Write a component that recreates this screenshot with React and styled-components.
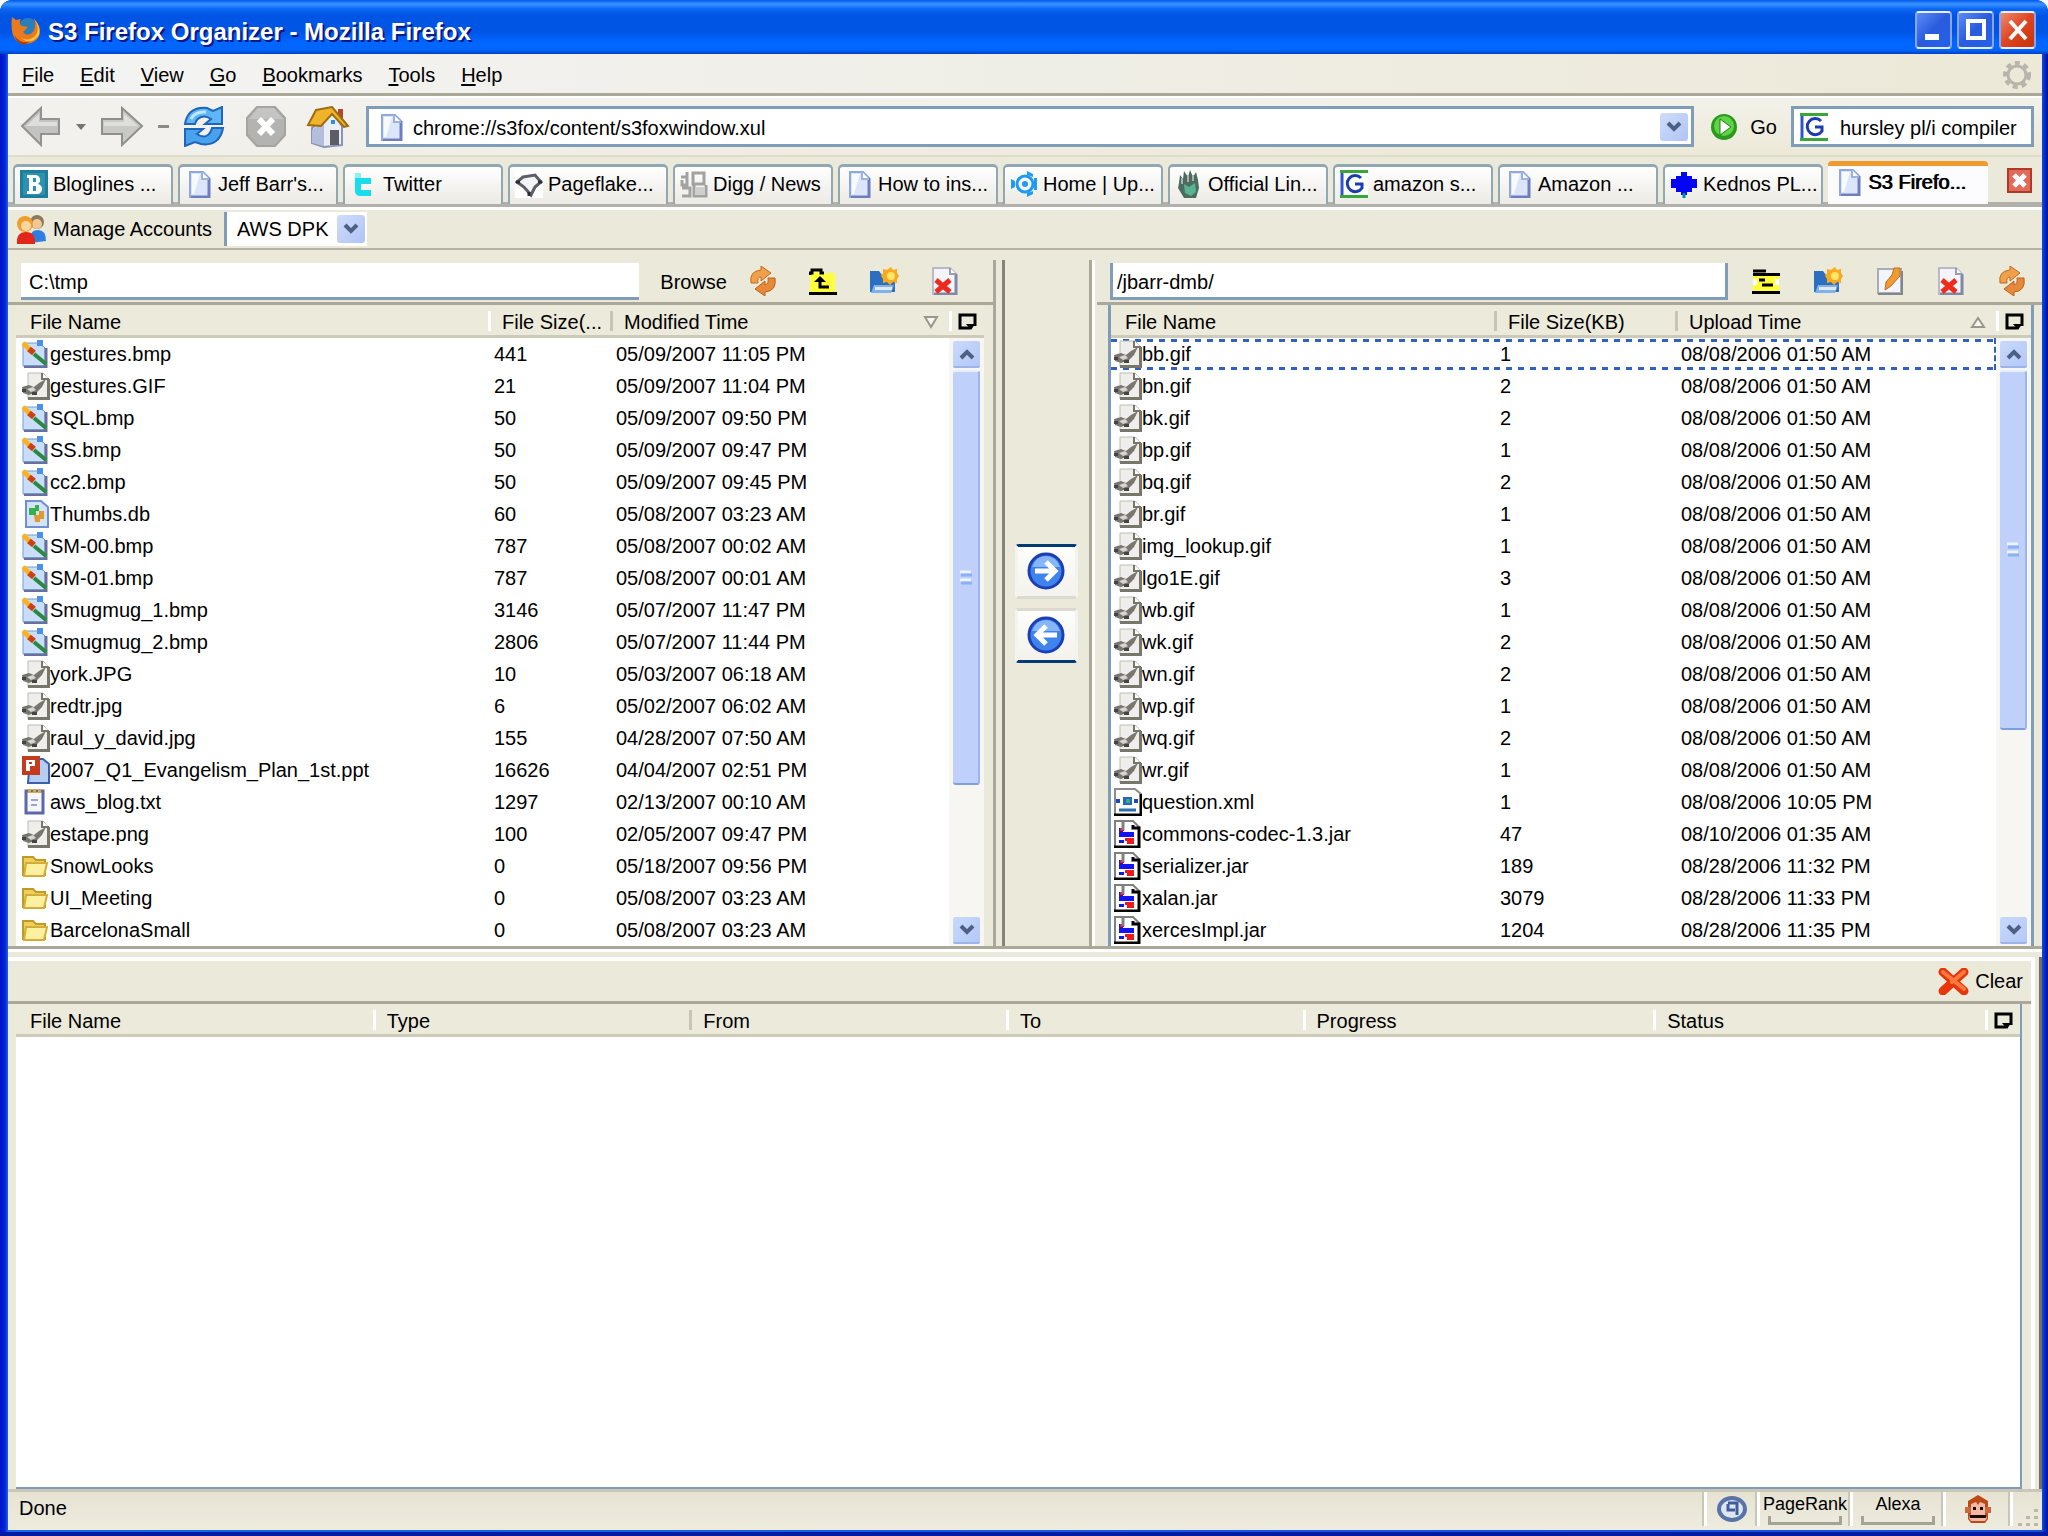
import React from "react";
import styled, { createGlobalStyle, css } from "styled-components";

const beige = "#ebe9da";
const line = "#aca899";
const fieldBlue = "#7f9db9";

const GlobalStyle = createGlobalStyle`
  *, *::before, *::after { box-sizing: border-box; }
  html, body { margin: 0; padding: 0; background: #fff; }
  body, button, input, select, table {
    font-family: "Liberation Sans", Arial, sans-serif;
    font-size: 20px;
    line-height: 24px;
    color: #000;
  }
  button, input, select { border: 0; margin: 0; padding: 0; background: none; border-radius: 0; }
  svg { display: block; flex: none; }
`;

/* ---------- window frame ---------- */

const Window = styled.div`
  min-height: 100vh;
  display: flex;
  flex-direction: column;
  border-radius: 12px 12px 0 0;
  border-bottom: 4px solid #021ba0;
  overflow: hidden;
  background: linear-gradient(to right, #0014c4 0, #0024d8 5px, #1a66ee 8px, #1450e0 calc(100% - 6px), #0a3ce0 calc(100% - 5px), #00128e 100%);
`;

const TitleBar = styled.header`
  height: 54px;
  display: flex;
  align-items: center;
  gap: 6px;
  padding: 6px 12px 0 10px;
  background: linear-gradient(#0058ee 0, #3a93ff 4px, #0a66f4 9px, #0054e3 16px, #0055e5 32px, #0066ff 42px, #0066ff 50px, #003fc0 54px);
`;

const Title = styled.h1`
  flex: 1;
  margin: 0;
  padding-top: 4px;
  font-size: 24px;
  line-height: 32px;
  font-weight: bold;
  color: #fff;
  text-shadow: 2px 2px 0 #0a1883;
  white-space: nowrap;
`;

const CaptionButtons = styled.div`
  display: flex;
  gap: 5px;
`;

const CaptionButton = styled.button`
  width: 37px;
  height: 38px;
  display: grid;
  place-items: center;
  border: 2px solid #e8efff;
  border-left-color: #86a6f4;
  border-right-color: #86a6f4;
  border-radius: 4px;
  background: ${(p) =>
    p.$danger
      ? "linear-gradient(135deg, #f0886c, #dd4420 50%, #c93208)"
      : "linear-gradient(135deg, #5b8bf6, #2a5bdd 50%, #2263ea)"};
`;

const Client = styled.main`
  flex: 1;
  display: flex;
  flex-direction: column;
  margin: 0 6px 2px 8px;
  background: ${beige};
`;

/* ---------- browser chrome ---------- */

const MenuBar = styled.nav`
  height: 44px;
  display: flex;
  align-items: center;
  padding: 0 10px 0 1px;
  border-bottom: 2px solid #fff;
  box-shadow: inset 0 -3px 0 ${line};
  background: linear-gradient(to right, #f4f4f3, #f0efe9 40%, #ece9d8);
`;

const MenuItem = styled.button`
  padding: 0 13px;
  height: 32px;
  u { text-underline-offset: 2px; }
`;

const Spacer = styled.div`
  flex: 1;
`;

const NavBar = styled.div`
  height: 59px;
  display: flex;
  align-items: flex-start;
  padding: 8px 8px 0 12px;
  border-bottom: 2px solid #dfdccb;
  background:
    linear-gradient(to right, #f2f1ee, rgba(236, 233, 216, 0) 70%),
    linear-gradient(#f3f2ea, #ece9d8);
`;

const IconButton = styled.button`
  display: grid;
  place-items: center;
  height: 41px;
  width: ${(p) => p.$w || 44}px;
  margin-right: ${(p) => p.$gap || 0}px;
`;

const Field = styled.div`
  display: flex;
  align-items: center;
  height: 41px;
  border: 3px solid ${fieldBlue};
  background: #fff;
  padding: 0 3px 0 ${(p) => p.$pad || 8}px;
  ${(p) => (p.$grow ? css`flex: 1; min-width: 0;` : css`width: 243px; padding-right: 0;`)}
  gap: ${(p) => (p.$grow ? 8 : 12)}px;
  input {
    flex: 1;
    min-width: 0;
    height: 34px;
    padding-top: 4px;
    outline: none;
  }
`;

const GoButton = styled.button`
  display: flex;
  align-items: center;
  gap: 12px;
  height: 41px;
  padding: 0 14px 0 17px;
`;

const ArrowBox = styled.span`
  display: grid;
  place-items: center;
  width: 28px;
  height: 28px;
  border-radius: 3px;
  background: linear-gradient(135deg, #cfdcfb, #b0c4f4);
  pointer-events: none;
`;

const DropButton = styled(ArrowBox).attrs({ as: "button" })`
  pointer-events: auto;
`;

const TabStrip = styled.div`
  height: 53px;
  display: flex;
  align-items: flex-end;
  padding: 0 10px 0 5px;
  border-bottom: 3px solid #fff;
  box-shadow: inset 0 -5px 0 #b2b0aa;
`;

const TabList = styled.div`
  flex: 1;
  min-width: 0;
  display: flex;
  align-items: flex-end;
  gap: 5px;
  padding-bottom: 3px;
`;

const Tab = styled.button`
  flex: 1 1 0;
  min-width: 0;
  display: flex;
  align-items: center;
  gap: 5px;
  padding: 0 2px 4px 5px;
  height: 40px;
  border: 2px solid #91a7b4;
  border-top-width: 3px;
  border-bottom: 0;
  border-radius: 5px 5px 0 0;
  background: linear-gradient(#fff, #f3f2ee 60%, #ecebe5);
  white-space: nowrap;
  ${(p) =>
    p.$active &&
    css`
      height: 43px;
      padding: 0 4px 6px 7px;
      border: 0;
      border-top: 5px solid #f0992e;
      border-radius: 4px 4px 0 0;
      background: #fcfcfe;
      text-shadow: 1px 0 0 #000;
    `}
`;

const TabClose = styled.button`
  width: 25px;
  height: 25px;
  margin: 0 0 14px 19px;
`;

const AccountBar = styled.div`
  height: 40px;
  display: flex;
  align-items: center;
  padding: 0 8px;
  border-bottom: 2px solid #b5b2a3;
`;

const ManageButton = styled.button`
  display: flex;
  align-items: center;
  gap: 7px;
  height: 34px;
  margin-right: 12px;
`;

const SelectBox = styled.label`
  display: grid;
  align-items: center;
  width: 143px;
  height: 34px;
  padding-right: 2px;
  background: #fff;
  border-left: 3px solid ${fieldBlue};
  select, ${ArrowBox} { grid-area: 1 / 1; }
  select { appearance: none; width: 100%; height: 34px; padding-left: 10px; outline: none; }
  ${ArrowBox} { justify-self: end; }
`;

/* ---------- file panes ---------- */

const Panes = styled.section`
  display: grid;
  grid-template-columns: minmax(0, 985fr) 102px minmax(0, 947fr);
  border-bottom: 3px solid ${line};
`;

const Pane = styled.div`
  display: flex;
  flex-direction: column;
`;

const PaneTools = styled.div`
  height: 55px;
  display: flex;
  align-items: center;
  padding: 10px ${(p) => (p.$remote ? 16 : 34)}px 0 13px;
  margin-left: ${(p) => (p.$remote ? 2 : 0)}px;
  gap: ${(p) => (p.$remote ? 33 : 32)}px;
  border-bottom: 3px solid ${line};
`;

const PathInput = styled.input`
  && {
    flex: 1;
    min-width: 0;
    height: 37px;
    padding: 6px 8px 0;
    margin-right: -11px;
    background: #fff;
    outline: none;
    border-bottom: 3px solid ${fieldBlue};
    ${(p) =>
      p.$remote &&
      css`
        padding-left: 4px;
        margin-right: -9px;
        border-left: 3px solid ${fieldBlue};
        border-right: 3px solid ${fieldBlue};
      `}
  }
`;

const ToolButton = styled.button`
  height: 32px;
  min-width: 28px;
  display: grid;
  place-items: center;
`;

const BrowseButton = styled(ToolButton)`
  padding-top: 2px;
  margin-right: -10px;
`;

const TableFrame = styled.div`
  flex: 1;
  display: flex;
  flex-direction: column;
  background: #fff;
  margin: ${(p) => p.$margin};
  ${(p) => p.$edges && css`border-left: 3px solid ${fieldBlue}; border-right: 3px solid ${fieldBlue};`}
  ${(p) => p.$foot && css`border-right: 2px solid ${fieldBlue}; border-bottom: 2px solid ${fieldBlue};`}
`;

const Table = styled.table`
  width: 100%;
  table-layout: fixed;
  border-spacing: 0;
  th, td { padding: 0; text-align: left; font-weight: normal; white-space: nowrap; overflow: hidden; }
  th { height: 33px; padding-top: 2px; background: #eceadb; border-bottom: 3px solid #cdcaba; }
`;

const HeadCell = styled.div`
  display: flex;
  align-items: center;
  justify-content: ${(p) => (p.$picker ? "center" : "space-between")};
  height: 20px;
  padding: 2px ${(p) => (p.$picker ? 2 : 10)}px 0 ${(p) => (p.$picker ? 2 : 11)}px;
  border-left: 3px solid ${(p) => ({ light: "#fff", dark: "#c8c5b5" }[p.$line] || "transparent")};
`;

const Cell = styled.div`
  display: flex;
  align-items: center;
  height: 32px;
  padding-left: ${(p) => p.$pad || 6}px;
  ${(p) =>
    p.$focused &&
    css`
      background:
        repeating-linear-gradient(to right, #2f62bd 0 6px, transparent 6px 12px) 0 1px / 100% 3px no-repeat,
        repeating-linear-gradient(to right, #2f62bd 0 6px, transparent 6px 12px) 0 100% / 100% 3px no-repeat;
    `}
  ${(p) => p.$last && css`border-right: 2px dashed #2f62bd;`}
`;

const ScrollCell = styled.td`
  height: 1px;
`;

const ScrollTrack = styled.div`
  height: 100%;
  display: flex;
  flex-direction: column;
  align-items: center;
  gap: 2px;
  padding: 3px 0 2px;
  background: #f7f6f2;
`;

const ScrollButton = styled.button`
  width: 27px;
  height: 27px;
  display: grid;
  place-items: center;
  border-radius: 2px;
  border-bottom: 2px solid #9cb4ea;
  background: linear-gradient(135deg, #cad9fc, #b3c8f6);
`;

const Thumb = styled.div`
  flex: ${(p) => p.$size} 1 0;
  width: 27px;
  display: grid;
  place-content: center;
  border-right: 2px solid #9db5ee;
  border-bottom: 2px solid #7f9fdc;
  border-top: 2px solid #e6eefe;
  border-radius: 3px;
  background: #bfd1fb;
`;

const ScrollRest = styled.div`
  flex: ${(p) => p.$size} 1 0;
`;

const Middle = styled.div`
  display: flex;
  flex-direction: column;
  align-items: center;
  justify-content: center;
  gap: 9px;
  margin: 10px 0 0;
  border-left: 3px solid ${line};
  border-right: 3px solid #fff;
  box-shadow: inset 6px 0 0 ${beige}, inset 9px 0 0 #87857a, inset -3px 0 0 ${line};
  padding-left: 4px;
`;

const MoveButton = styled.button`
  width: 63px;
  height: 55px;
  display: grid;
  place-items: center;
  border: 3px solid #d5d2c4;
  border-top-color: ${(p) => (p.$first ? "#003c74" : "#dbd9d0")};
  border-bottom-color: ${(p) => (p.$first ? "#dbd9d0" : "#003c74")};
  border-left-color: #f4f3ee;
  border-right-color: #f4f3ee;
  border-radius: 4px;
  background: linear-gradient(#fdfdfc, #f3f2ec);
`;

/* ---------- transfer queue ---------- */

const Queue = styled.section`
  flex: 1;
  display: flex;
  flex-direction: column;
  border-top: 3px solid #fff;
  padding-top: 5px;
`;

const QueueBody = styled.div`
  flex: 1;
  display: flex;
  flex-direction: column;
  margin-right: 4px;
  border-top: 4px solid #fff;
  border-right: 4px solid #fff;
`;

const QueueEdge = styled.div`
  flex: 1;
  display: flex;
  flex-direction: column;
  border-right: 3px solid #716f64;
`;

const QueueTools = styled.div`
  height: 43px;
  display: flex;
  align-items: center;
  justify-content: flex-end;
  padding-right: 8px;
  border-bottom: 3px solid ${line};
`;

const ClearButton = styled.button`
  display: flex;
  align-items: center;
  gap: 6px;
  height: 32px;
`;

/* ---------- status bar ---------- */

const StatusBar = styled.footer`
  height: 41px;
  display: flex;
  border-top: 3px solid #cbc7b8;
  background: linear-gradient(#e6e3d3, #eeecdf);
`;

const StatusText = styled.div`
  flex: 1;
  padding: 4px 11px;
`;

const StatusCell = styled.div`
  width: ${(p) => p.$w}px;
  display: flex;
  flex-direction: column;
  align-items: center;
  justify-content: ${(p) => (p.$end ? "flex-end" : "center")};
  margin-bottom: 4px;
  border-left: 3px solid #fff;
  box-shadow: -2px 0 0 #c9c6b7;
  font-size: 18px;
  line-height: 20px;
`;

const Meter = styled.div`
  width: 74px;
  height: 9px;
  margin-top: 2px;
  border: 3px solid #a5a398;
  border-top: 0;
`;

/* ---------- drawings ---------- */

const Svg = ({ w = 28, h = 28, box, children }) => (
  <svg width={w} height={h} viewBox={box || `0 0 ${w} ${h}`} aria-hidden="true">
    {children}
  </svg>
);

const Chevron = ({ up }) => (
  <Svg w={16} h={12}>
    <path d={up ? "M2 10 L8 4 L14 10" : "M2 2 L8 8 L14 2"} fill="none" stroke="#4d6185" strokeWidth="4" />
  </Svg>
);

const PageIcon = () => (
  <Svg>
    <path d="M5 2h13l6 6v19H5z" fill="#dbe6fb" stroke="#8fa9dc" strokeWidth="2" />
    <path d="M7 4h8L9 24H7z" fill="#f7faff" />
    <path d="M24 8v19H6" fill="none" stroke="#6f7fbd" strokeWidth="3" />
    <path d="M17 2v7h7" fill="#fff" stroke="#9db2dc" strokeWidth="2" />
  </Svg>
);

const Google = () => (
  <Svg>
    <rect width="28" height="28" fill="#fff" />
    <path d="M0 1.500h28M0 26.500h28" stroke="#3aa63a" strokeWidth="3" />
    <path d="M2 3v22" stroke="#2d55d0" strokeWidth="3" />
    <path d="M21 8a8 8 0 1 0 1 10v-4h-7" fill="none" stroke="#1b3bb0" strokeWidth="3" />
  </Svg>
);

const tabIcons = {
  page: <PageIcon />,
  google: <Google />,
  bloglines: (
    <Svg>
      <rect width="28" height="28" fill="#1f7f9b" />
      <rect x="3" y="3" width="22" height="22" fill="#2b93b0" />
      <path d="M7 5h9a5 5 0 0 1 2 9a5 5 0 0 1-2 10H7v-3h2V8H7zM13 8v4h3V8zM13 16v5h3v-5z" fill="#fff" fillRule="evenodd" />
    </Svg>
  ),
  twitter: (
    <Svg>
      <path d="M5 3h6v5h10v6H11v6h10v6H9q-4-1-4-5z" fill="#19dcec" />
      <path d="M5 3h6v5H5z" fill="#8cf0f6" />
    </Svg>
  ),
  pageflakes: (
    <Svg>
      <rect width="28" height="28" fill="#fff" />
      <path d="M8 7L20 5L26 12L20 17L16 25L9 17L2 12z" fill="#f4f4f6" stroke="#5d5f68" strokeWidth="3" />
      <path d="M1 12h4M23 12h4M14 22v4" stroke="#2d2f36" strokeWidth="3" />
    </Svg>
  ),
  digg: (
    <Svg>
      <path d="M1 7h7M7 2v13H2V10M13 3h11v11H13zM2 18h8v8H2M14 14v12h12V15" fill="none" stroke="#a2a2a2" strokeWidth="3" />
      <rect x="15" y="17" width="10" height="8" fill="#cfcfcf" />
    </Svg>
  ),
  upcoming: (
    <Svg>
      <circle cx="15" cy="14" r="8" fill="none" stroke="#1f9bf0" strokeWidth="3" />
      <circle cx="15" cy="14" r="3" fill="#1f9bf0" />
      <path d="M1 9l4 2v6l-4 2zM17 1l6 3v3l-6-2zM17 27l6-3v-3l-6 2zM24 8h3v12h-3z" fill="#1f9bf0" />
    </Svg>
  ),
  hand: (
    <Svg>
      <path d="M4 13l1-8 3 4 1-8 4 6 2-7 3 7 3-5 2 8 1 8-3 10H9L3 18z" fill="#4e6b62" />
      <path d="M9 14l5 3 6-4 1 9-5 4-6-3z" fill="#57b592" />
      <path d="M7 8v6M13 5v7M18 5v6" stroke="#a9b3ae" strokeWidth="2" />
    </Svg>
  ),
  kednos: (
    <Svg>
      <path d="M1 9h5V6h5V2h6v4h5v3h5v9h-5v4h-5v3h-6v-3H6v-4H1z" fill="#0505f5" />
      <path d="M14 23v5" stroke="#058a9a" strokeWidth="3" />
    </Svg>
  ),
};

const FirefoxIcon = () => (
  <Svg w={32} h={30}>
    <circle cx="18" cy="13" r="10" fill="#2b7fb8" />
    <path d="M2 2l4 3 5-1q-3 5 1 7l6 1-5 5q4 5 9 1 5-5 2-15l5 8q3 10-4 15-9 6-18 0Q0 21 2 2z" fill="#ec7a1c" />
    <path d="M25 5q5 8 1 15-6 7-15 3 10 8 18-3 2-8-4-15z" fill="#fbc63c" />
    <path d="M4 20q6 9 16 7l-6 3Q6 28 4 20z" fill="#a9420c" />
  </Svg>
);

const BackArrow = () => (
  <Svg w={42} h={41}>
    <path d="M2 20L21 2v11h18v15H21v11z" fill="#c3c3c1" stroke="#929290" strokeWidth="2" />
    <path d="M6 20L19 8v8h18v4z" fill="#dededc" />
  </Svg>
);

const ForwardArrow = () => (
  <Svg w={44} h={41}>
    <path d="M42 20L22 2v11H2v15h20v11z" fill="#c9c9c6" stroke="#8f8f8c" strokeWidth="2" />
    <path d="M38 20L24 8v8H4v4z" fill="#dededb" />
  </Svg>
);

const ReloadIcon = () => (
  <Svg w={42} h={41}>
    <path d="M2 18C4 6 12 1 24 2l6 3 9-4v17H22l6-5c-7-5-14-2-16 5z" fill="#5fb6f4" stroke="#1e65bb" strokeWidth="2" />
    <path d="M40 22C38 34 30 40 18 38l-6-2-10 4V23h18l-6 5c7 5 13 2 15-6z" fill="#49a2ee" stroke="#1e65bb" strokeWidth="2" />
    <path d="M8 13q4-8 15-7" fill="none" stroke="#bfe6ff" strokeWidth="3" />
  </Svg>
);

const StopIcon = () => (
  <Svg w={42} h={41}>
    <path d="M12 1h18l10 11v17L30 40H12L2 29V12z" fill="#b3b3b1" stroke="#a4a4a2" strokeWidth="2" />
    <path d="M13 2h16l9 11H4z" fill="#c4c4c2" />
    <path d="M14 13l14 15M28 13L14 28" stroke="#fff" strokeWidth="6" />
  </Svg>
);

const HomeIcon = () => (
  <Svg w={46} h={42}>
    <path d="M6 22v15l12 4 18-2V20L26 6z" fill="#e9edf6" stroke="#8c94b4" strokeWidth="2" />
    <path d="M6 24l12-9v25L6 37z" fill="#b3bedc" />
    <path d="M32 3h5v10h-5z" fill="#b5482c" />
    <path d="M10 4L26 1L42 20l-4 1-12-13-11 12-13-1z" fill="#efb42a" stroke="#9c6d12" strokeWidth="2" />
    <rect x="24" y="24" width="9" height="15" fill="#5c5c62" />
    <rect x="25" y="14" width="4" height="4" fill="#2f8ae0" />
  </Svg>
);

const GoIcon = () => (
  <Svg w={27} h={28}>
    <circle cx="13" cy="14" r="13" fill="#2a9a1d" />
    <circle cx="13" cy="13" r="10" fill="#5fd444" />
    <path d="M9 6l11 8-11 8z" fill="#fff" stroke="#1f7d15" strokeWidth="1" />
  </Svg>
);

const Throbber = () => (
  <Svg w={30} h={28}>
    <circle cx="15" cy="14" r="9" fill="none" stroke="#b7b5ac" strokeWidth="3" />
    <circle cx="15" cy="14" r="12" fill="none" stroke="#b7b5ac" strokeWidth="4" strokeDasharray="5 4" />
  </Svg>
);

const PeopleIcon = () => (
  <Svg w={30} h={30}>
    <circle cx="21" cy="8" r="7" fill="#8a7a5e" />
    <circle cx="21" cy="10" r="5" fill="#f3c793" />
    <path d="M14 29q-1-13 8-13 8 0 8 11z" fill="#2f7fe0" />
    <circle cx="9" cy="10" r="8" fill="#ee9e2b" />
    <circle cx="10" cy="12" r="5" fill="#fbd6a2" />
    <path d="M1 30q-1-12 9-12t9 12z" fill="#e3261b" />
  </Svg>
);

const RefreshIcon = () => (
  <Svg w={28} h={30}>
    <path d="M2 17Q0 5 12 4V0l10 7-10 8v-4Q8 11 9 17z" fill="#f0a04b" stroke="#c46a1f" strokeWidth="1" />
    <path d="M26 12q2 13-10 14v4L6 23l10-8v4q4-1 3-7z" fill="#e8893a" stroke="#b9601c" strokeWidth="1" />
  </Svg>
);

const UpFolderIcon = () => (
  <Svg>
    <path d="M1 25V7l3-5h8l3 4h11v19z" fill="#ffff3c" />
    <path d="M1 8V6h2V3h9v3h3M0 26.500h28" fill="none" stroke="#000" strokeWidth="3" />
    <path d="M11 12v8h9" fill="none" stroke="#000" strokeWidth="3" />
    <path d="M5 15l6-6 6 6z" fill="#000" />
  </Svg>
);

const UpFolderWide = () => (
  <Svg>
    <path d="M1 25V6h26v19z" fill="#ffff3c" />
    <path d="M1 4h13M1 7.500h27M0 25.500h28" fill="none" stroke="#000" strokeWidth="3" />
    <path d="M7 13h6M10 18h11" stroke="#000" strokeWidth="3" />
    <path d="M1 12h4v6H1zM23 12h4v6h-4z" fill="#fff" />
  </Svg>
);

const NewFolderIcon = () => (
  <Svg w={30} h={28}>
    <path d="M1 4h9l3 4h13v17H1z" fill="#2c6fc0" />
    <path d="M5 18h20l-3 8H2z" fill="#7fb2ec" />
    <path d="M6 20h17v3H6z" fill="#dceafc" />
    <path d="M22 0l2 3 4-1v4l2 3-2 3v4l-4-1-3 3-3-3-4 1v-4l-2-3 2-3V2l4 1z" fill="#f8a91e" />
    <circle cx="22" cy="9" r="4" fill="#ffe56a" />
  </Svg>
);

const RenameIcon = () => (
  <Svg>
    <rect x="2" y="2" width="23" height="24" fill="#f3f5fc" stroke="#a9abb5" strokeWidth="2" />
    <path d="M2 27h24V4" fill="none" stroke="#84868f" strokeWidth="2" />
    <path d="M18 1h6v8L15 19l-6 4 1-8 6-7z" fill="#ef9a33" stroke="#c1701a" strokeWidth="1" />
  </Svg>
);

const DeleteIcon = () => (
  <Svg>
    <path d="M2 1h17l6 6v20H2z" fill="#f4f5fb" stroke="#b9bac6" strokeWidth="2" />
    <path d="M25 7v20H3" fill="none" stroke="#7f88a6" strokeWidth="3" />
    <path d="M19 1v6h6" fill="#fff" stroke="#9a9db0" strokeWidth="2" />
    <path d="M5 13l14 12M19 13L5 25" stroke="#ee2a1c" strokeWidth="5" />
  </Svg>
);

const RedCross = () => (
  <Svg w={31} h={27}>
    <path d="M5 4l21 19M26 4L5 23" stroke="#e8360c" strokeWidth="9" strokeLinecap="round" />
    <path d="M5 4l21 17M26 4L14 14" stroke="#ff7a3e" strokeWidth="4" strokeLinecap="round" />
  </Svg>
);

const MoveIcon = ({ left }) => (
  <Svg w={38} h={38}>
    <circle cx="19" cy="19" r="17" fill="#3f83ee" stroke="#1c3fb4" strokeWidth="3" />
    <path d="M5 15Q9 4 19 4t14 11z" fill="#86b6f8" />
    <path
      d={left ? "M30 19H11M19 10l-9 9 9 9" : "M8 19h19M19 10l9 9-9 9"}
      fill="none" stroke="#fff" strokeWidth="5"
    />
  </Svg>
);

const PickerIcon = () => (
  <Svg w={20} h={18}>
    <path d="M12 15H2V2h15v11" fill="none" stroke="#000" strokeWidth="3" />
    <path d="M8 11h9l-4 6z" fill="#000" />
  </Svg>
);

const SortIcon = ({ up }) => (
  <Svg w={16} h={14}>
    <path d={up ? "M2 12L8 3l6 9z" : "M2 2h12L8 12z"} fill="#f8f7f0" stroke="#9a988b" strokeWidth="2" />
  </Svg>
);

const fileIcons = {
  bmp: (
    <Svg>
      <path d="M1 3h16l6 5v18H1z" fill="#c9defa" stroke="#7c9ad6" strokeWidth="1" />
      <path d="M24 8v19H2" fill="none" stroke="#66729e" strokeWidth="3" />
      <path d="M15 0h6v6h-6z" fill="#4b92e0" />
      <path d="M1 3l8 8" stroke="#fbb41c" strokeWidth="5" />
      <path d="M7 9l5 4" stroke="#c8430f" strokeWidth="6" />
      <path d="M12 14l12 10" stroke="#2a8a3c" strokeWidth="4" />
    </Svg>
  ),
  image: (
    <Svg>
      <path d="M6 1h15l6 6v20H6z" fill="#efeeea" stroke="#bdbbb3" strokeWidth="1" />
      <path d="M26.500 7v19.500H6" fill="none" stroke="#77766a" strokeWidth="3" />
      <path d="M20 1v6h7" fill="#fff" stroke="#77766a" strokeWidth="2" />
      <path d="M0 15l7-2 5 2 5-4 7-4-4 8-5 5-8 3-6-2z" fill="#78766e" />
      <path d="M5 17l6-2 3 3-5 2z" fill="#d8d6ce" />
      <path d="M0 17h4v3H0zM10 20h5v3h-5z" fill="#45443e" />
    </Svg>
  ),
  db: (
    <Svg>
      <path d="M4 1h15l7 6v20H4z" fill="#d3e3fa" stroke="#6f8fd2" strokeWidth="2" />
      <path d="M7 8h6V5h4v6h-3v4H7z" fill="#36b04a" />
      <path d="M12 15h5v-4h5v8h-4v3h-5z" fill="#e09b2c" />
    </Svg>
  ),
  ppt: (
    <Svg>
      <path d="M8 3h13l6 5v19H6z" fill="#b6cdf2" stroke="#395fae" strokeWidth="2" />
      <rect width="18" height="19" fill="#c33c1d" />
      <path d="M4 4h9v6H8v5H4zM7 6v2h3V6z" fill="#fff" fillRule="evenodd" />
    </Svg>
  ),
  txt: (
    <Svg>
      <rect x="4" y="3" width="17" height="22" fill="#f5f7ff" stroke="#5e68a8" strokeWidth="3" />
      <path d="M6 3h14" stroke="#dba92c" strokeWidth="4" strokeDasharray="3 2" />
      <path d="M9 12h7M9 17h6" stroke="#9ba6cc" strokeWidth="2" />
    </Svg>
  ),
  folder: (
    <Svg>
      <path d="M1 23V5h10l3 3h9v15z" fill="#f1cf5c" stroke="#c09a26" strokeWidth="2" />
      <path d="M4 11h21l-3 13H2z" fill="#fdf0a0" stroke="#d3ad34" strokeWidth="2" />
    </Svg>
  ),
  xml: (
    <Svg>
      <path d="M1 1h20l6 5v21H1z" fill="#fff" stroke="#8d8d8d" strokeWidth="2" />
      <path d="M27 6v21H0" fill="none" stroke="#000" strokeWidth="3" />
      <path d="M2 13h4M20 13h4" stroke="#1b49c6" strokeWidth="4" />
      <rect x="9" y="9" width="9" height="8" fill="#2c62c4" />
      <rect x="12" y="11" width="4" height="4" fill="#35b070" />
      <path d="M5 22h17" stroke="#2b6fae" strokeWidth="3" />
    </Svg>
  ),
  jar: (
    <Svg>
      <path d="M1 1h18l6 6v20H1z" fill="#fff" stroke="#7f7f7f" strokeWidth="2" />
      <path d="M19 5v3h6v19H0" fill="none" stroke="#000" strokeWidth="3" />
      <path d="M5 8h4v4h11v5H5z" fill="#1414ee" />
      <path d="M6 8h4v3H6zM11 18h9v6h-7v-3h-2z" fill="#ee1818" />
      <path d="M5 20h5v3H5z" fill="#1414ee" />
      <path d="M9 2v8" stroke="#7f7f7f" strokeWidth="3" />
    </Svg>
  ),
};

/* ---------- data ---------- */

const menus = ["File", "Edit", "View", "Go", "Bookmarks", "Tools", "Help"];

const tabs = [
  ["bloglines", "Bloglines ..."],
  ["page", "Jeff Barr's..."],
  ["twitter", "Twitter"],
  ["pageflakes", "Pageflake..."],
  ["digg", "Digg / News"],
  ["page", "How to ins..."],
  ["upcoming", "Home | Up..."],
  ["hand", "Official Lin..."],
  ["google", "amazon s..."],
  ["page", "Amazon ..."],
  ["kednos", "Kednos PL..."],
  ["page", "S3 Firefo..."],
];

const localFiles = [
  ["bmp", "gestures.bmp", "441", "05/09/2007 11:05 PM"],
  ["image", "gestures.GIF", "21", "05/09/2007 11:04 PM"],
  ["bmp", "SQL.bmp", "50", "05/09/2007 09:50 PM"],
  ["bmp", "SS.bmp", "50", "05/09/2007 09:47 PM"],
  ["bmp", "cc2.bmp", "50", "05/09/2007 09:45 PM"],
  ["db", "Thumbs.db", "60", "05/08/2007 03:23 AM"],
  ["bmp", "SM-00.bmp", "787", "05/08/2007 00:02 AM"],
  ["bmp", "SM-01.bmp", "787", "05/08/2007 00:01 AM"],
  ["bmp", "Smugmug_1.bmp", "3146", "05/07/2007 11:47 PM"],
  ["bmp", "Smugmug_2.bmp", "2806", "05/07/2007 11:44 PM"],
  ["image", "york.JPG", "10", "05/03/2007 06:18 AM"],
  ["image", "redtr.jpg", "6", "05/02/2007 06:02 AM"],
  ["image", "raul_y_david.jpg", "155", "04/28/2007 07:50 AM"],
  ["ppt", "2007_Q1_Evangelism_Plan_1st.ppt", "16626", "04/04/2007 02:51 PM"],
  ["txt", "aws_blog.txt", "1297", "02/13/2007 00:10 AM"],
  ["image", "estape.png", "100", "02/05/2007 09:47 PM"],
  ["folder", "SnowLooks", "0", "05/18/2007 09:56 PM"],
  ["folder", "UI_Meeting", "0", "05/08/2007 03:23 AM"],
  ["folder", "BarcelonaSmall", "0", "05/08/2007 03:23 AM"],
];

const remoteFiles = [
  ["image", "bb.gif", "1", "08/08/2006 01:50 AM"],
  ["image", "bn.gif", "2", "08/08/2006 01:50 AM"],
  ["image", "bk.gif", "2", "08/08/2006 01:50 AM"],
  ["image", "bp.gif", "1", "08/08/2006 01:50 AM"],
  ["image", "bq.gif", "2", "08/08/2006 01:50 AM"],
  ["image", "br.gif", "1", "08/08/2006 01:50 AM"],
  ["image", "img_lookup.gif", "1", "08/08/2006 01:50 AM"],
  ["image", "lgo1E.gif", "3", "08/08/2006 01:50 AM"],
  ["image", "wb.gif", "1", "08/08/2006 01:50 AM"],
  ["image", "wk.gif", "2", "08/08/2006 01:50 AM"],
  ["image", "wn.gif", "2", "08/08/2006 01:50 AM"],
  ["image", "wp.gif", "1", "08/08/2006 01:50 AM"],
  ["image", "wq.gif", "2", "08/08/2006 01:50 AM"],
  ["image", "wr.gif", "1", "08/08/2006 01:50 AM"],
  ["xml", "question.xml", "1", "08/08/2006 10:05 PM"],
  ["jar", "commons-codec-1.3.jar", "47", "08/10/2006 01:35 AM"],
  ["jar", "serializer.jar", "189", "08/28/2006 11:32 PM"],
  ["jar", "xalan.jar", "3079", "08/28/2006 11:33 PM"],
  ["jar", "xercesImpl.jar", "1204", "08/28/2006 11:35 PM"],
];

function FileTable({ label, files, columns, widths, sortUp, thumb, rest, focus, pad }) {
  return (
    <Table aria-label={label}>
      <colgroup>
        <col />
        {widths.map((w, i) => (
          <col key={i} width={w} />
        ))}
      </colgroup>
      <thead>
        <tr>
          {columns.map(([name, tone], i) => (
            <th key={name} scope="col">
              <HeadCell $line={tone}>
                {name}
                {i === 2 && <SortIcon up={sortUp} />}
              </HeadCell>
            </th>
          ))}
          <th aria-label="Columns">
            <HeadCell $line="light" $picker><PickerIcon /></HeadCell>
          </th>
        </tr>
      </thead>
      <tbody>
        {files.map(([icon, name, size, time], i) => (
          <tr key={name}>
            <td><Cell $pad={pad} $focused={focus && i === 0}>{fileIcons[icon]}{name}</Cell></td>
            <td><Cell $focused={focus && i === 0}>{size}</Cell></td>
            <td><Cell $focused={focus && i === 0} $last={focus && i === 0}>{time}</Cell></td>
            {i === 0 && (
              <ScrollCell rowSpan={files.length}>
                <ScrollTrack>
                  <ScrollButton aria-label="Scroll up"><Chevron up /></ScrollButton>
                  <Thumb $size={thumb}>
                    <Svg w={12} h={16}>
                      <path d="M0 2h11M0 10h11" stroke="#eef4fe" strokeWidth="3" />
                      <path d="M1 5h11M1 13h11" stroke="#8cb0f8" strokeWidth="3" />
                    </Svg>
                  </Thumb>
                  <ScrollRest $size={rest} />
                  <ScrollButton aria-label="Scroll down"><Chevron /></ScrollButton>
                </ScrollTrack>
              </ScrollCell>
            )}
          </tr>
        ))}
      </tbody>
    </Table>
  );
}

export default function App() {
  return (
    <>
      <GlobalStyle />
      <Window>
        <TitleBar>
          <FirefoxIcon />
          <Title>S3 Firefox Organizer - Mozilla Firefox</Title>
          <CaptionButtons>
            <CaptionButton aria-label="Minimize">
              <Svg w={24} h={24}><rect x="3" y="16" width="14" height="6" fill="#fff" /></Svg>
            </CaptionButton>
            <CaptionButton aria-label="Maximize">
              <Svg w={24} h={24}><path d="M4 3h16v17H4z" fill="none" stroke="#fff" strokeWidth="4" /></Svg>
            </CaptionButton>
            <CaptionButton aria-label="Close" $danger>
              <Svg w={24} h={24}><path d="M4 3l16 18M20 3L4 21" stroke="#fff" strokeWidth="4" /></Svg>
            </CaptionButton>
          </CaptionButtons>
        </TitleBar>

        <Client>
          <MenuBar>
            {menus.map((m) => (
              <MenuItem key={m}><u>{m[0]}</u>{m.slice(1)}</MenuItem>
            ))}
            <Spacer />
            <Throbber />
          </MenuBar>

          <NavBar>
            <IconButton aria-label="Back" $w={42}><BackArrow /></IconButton>
            <IconButton aria-label="Back history" $w={38}>
              <Svg w={10} h={6}><path d="M0 0h10L5 6z" fill="#77756c" /></Svg>
            </IconButton>
            <IconButton aria-label="Forward"><ForwardArrow /></IconButton>
            <IconButton aria-label="Forward history" $w={38}>
              <Svg w={11} h={3}><path d="M0 0h11v3H0z" fill="#8d8b83" /></Svg>
            </IconButton>
            <IconButton aria-label="Reload" $gap={18}><ReloadIcon /></IconButton>
            <IconButton aria-label="Stop" $gap={18}><StopIcon /></IconButton>
            <IconButton aria-label="Home" $w={46} $gap={14}><HomeIcon /></IconButton>
            <Field $grow>
              <PageIcon />
              <input aria-label="Location" defaultValue="chrome://s3fox/content/s3foxwindow.xul" />
              <DropButton aria-label="Show history"><Chevron /></DropButton>
            </Field>
            <GoButton><GoIcon />Go</GoButton>
            <Field $pad={6}>
              <Google />
              <input aria-label="Search" defaultValue="hursley pl/i compiler" />
            </Field>
          </NavBar>

          <TabStrip>
            <TabList role="tablist">
              {tabs.map(([icon, name], i) => (
                <Tab key={name} role="tab" $active={i === tabs.length - 1} aria-selected={i === tabs.length - 1}>
                  {tabIcons[icon]}
                  {name}
                </Tab>
              ))}
            </TabList>
            <TabClose aria-label="Close tab">
              <Svg w={25} h={25}>
                <rect x="1" y="1" width="23" height="23" fill="#e26a58" stroke="#b03a2a" strokeWidth="2" />
                <path d="M7 7l11 11M18 7L7 18" stroke="#fff" strokeWidth="5" />
              </Svg>
            </TabClose>
          </TabStrip>

          <AccountBar>
            <ManageButton><PeopleIcon />Manage Accounts</ManageButton>
            <SelectBox>
              <select aria-label="Account"><option>AWS DPK</option></select>
              <ArrowBox><Chevron /></ArrowBox>
            </SelectBox>
          </AccountBar>

          <Panes>
            <Pane>
              <PaneTools>
                <PathInput aria-label="Local folder" defaultValue="C:\tmp" />
                <BrowseButton>Browse</BrowseButton>
                <ToolButton aria-label="Refresh"><RefreshIcon /></ToolButton>
                <ToolButton aria-label="Up one folder"><UpFolderIcon /></ToolButton>
                <ToolButton aria-label="New folder"><NewFolderIcon /></ToolButton>
                <ToolButton aria-label="Delete"><DeleteIcon /></ToolButton>
              </PaneTools>
              <TableFrame $margin="0 9px 0 8px">
                <FileTable
                  label="Local files"
                  files={localFiles}
                  columns={[["File Name"], ["File Size(...", "light"], ["Modified Time", "dark"]]}
                  widths={[122, 339, 35]}
                  thumb={415}
                  rest={129}
                  pad={6}
                />
              </TableFrame>
            </Pane>

            <Middle>
              <MoveButton aria-label="Upload" $first><MoveIcon /></MoveButton>
              <MoveButton aria-label="Download"><MoveIcon left /></MoveButton>
            </Middle>

            <Pane>
              <PaneTools $remote>
                <PathInput $remote aria-label="Remote folder" defaultValue="/jbarr-dmb/" />
                <ToolButton aria-label="Up one folder"><UpFolderWide /></ToolButton>
                <ToolButton aria-label="New folder"><NewFolderIcon /></ToolButton>
                <ToolButton aria-label="Rename"><RenameIcon /></ToolButton>
                <ToolButton aria-label="Delete"><DeleteIcon /></ToolButton>
                <ToolButton aria-label="Refresh"><RefreshIcon /></ToolButton>
              </PaneTools>
              <TableFrame $margin="0 8px 0 13px" $edges>
                <FileTable
                  label="Remote files"
                  files={remoteFiles}
                  columns={[["File Name"], ["File Size(KB)", "dark"], ["Upload Time", "dark"]]}
                  widths={[181, 321, 35]}
                  sortUp
                  thumb={359}
                  rest={185}
                  focus
                  pad={3}
                />
              </TableFrame>
            </Pane>
          </Panes>

          <Queue>
            <QueueEdge>
              <QueueBody>
                <QueueTools>
                  <ClearButton><RedCross />Clear</ClearButton>
                </QueueTools>
                <TableFrame $margin="0 9px 0 8px" $foot>
                  <Table aria-label="Transfers">
                    <colgroup>
                      <col width="17.8%" />
                      <col width="15.8%" />
                      <col width="15.8%" />
                      <col width="14.8%" />
                      <col width="17.5%" />
                      <col />
                      <col width="35" />
                    </colgroup>
                    <thead>
                      <tr>
                        <th scope="col"><HeadCell>File Name</HeadCell></th>
                        <th scope="col"><HeadCell $line="light">Type</HeadCell></th>
                        <th scope="col"><HeadCell $line="dark">From</HeadCell></th>
                        <th scope="col"><HeadCell $line="light">To</HeadCell></th>
                        <th scope="col"><HeadCell $line="light">Progress</HeadCell></th>
                        <th scope="col"><HeadCell $line="light">Status</HeadCell></th>
                        <th aria-label="Columns"><HeadCell $line="light" $picker><PickerIcon /></HeadCell></th>
                      </tr>
                    </thead>
                  </Table>
                </TableFrame>
              </QueueBody>
            </QueueEdge>
          </Queue>

          <StatusBar>
            <StatusText>Done</StatusText>
            <StatusCell $w={53}>
              <Svg w={30} h={28}>
                <ellipse cx="15" cy="14" rx="13" ry="11" fill="#dfe6f2" stroke="#5873a8" strokeWidth="4" />
                <path d="M11 8h9v12M18 15h-7V9" fill="none" stroke="#3f5f9c" strokeWidth="3" />
              </Svg>
            </StatusCell>
            <StatusCell $w={93}>PageRank<Meter /></StatusCell>
            <StatusCell $w={93}>Alexa<Meter /></StatusCell>
            <StatusCell $w={67}>
              <Svg w={28} h={28}>
                <path d="M9 3l5-3 5 3 5 3v18l-3 4H7l-3-4V6z" fill="#bb4a16" />
                <path d="M1 12h26v6H1z" fill="#c9683c" />
                <path d="M7 9l5-2 2 3 2-3 5 2v10l2 4-2 3H7l-2-3 2-4z" fill="#f3b7a6" />
                <path d="M9 12h3v3H9zM16 12h3v3h-3zM6 20h16v3H6z" fill="#1c0a06" />
              </Svg>
            </StatusCell>
            <StatusCell $w={32} $end>
              <Svg w={24} h={20}>
                <path d="M2 17h4v3H2zM10 17h4v3h-4zM18 17h4v3h-4zM10 10h4v3h-4zM18 10h4v3h-4zM18 3h4v3h-4z" fill="#bbb8a8" />
              </Svg>
            </StatusCell>
          </StatusBar>
        </Client>
      </Window>
    </>
  );
}
